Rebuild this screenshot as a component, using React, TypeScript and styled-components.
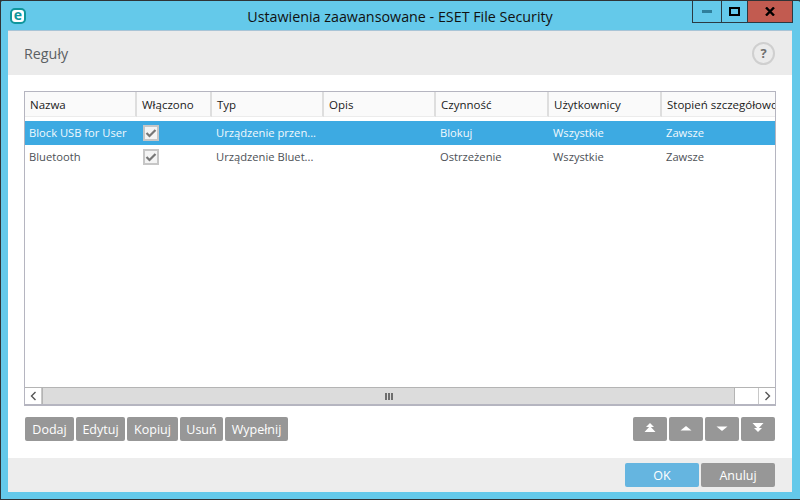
import React from 'react'
import styled, { createGlobalStyle } from 'styled-components'

const GRID_COLUMNS = '112px 75px 112px 112px 113px 113px 140px'

const GlobalStyle = createGlobalStyle`
  html, body {
    margin: 0;
    padding: 0;
    background: #2f3336;
  }
  * {
    box-sizing: border-box;
  }
`

const Window = styled.div`
  width: 800px;
  height: 500px;
  display: flex;
  flex-direction: column;
  overflow: hidden;
  padding: 0 7px 7px 7px;
  background: #64c9ea;
  border: 1px solid #2f3336;
  border-right-width: 0;
  border-radius: 2px 2px 0 0;
  font-family: 'Open Sans', 'Liberation Sans', sans-serif;
`

const TitleBar = styled.div`
  height: 29px;
  flex: none;
  margin-right: 1px;
  display: grid;
  grid-template-columns: 1fr auto 1fr;
  align-items: start;
`

const Logo = styled.div`
  width: 16px;
  height: 16px;
  margin: 7px 0 0 2px;
  display: flex;
  align-items: center;
  justify-content: center;
  background: #fff;
  border: 2px solid #0f969c;
  border-radius: 5px;
  color: #0f969c;
  font: 700 14px/1 'Open Sans', sans-serif;
  padding-bottom: 2px;
`

const Title = styled.div`
  margin-top: 6px;
  font-size: 14.3px;
  line-height: 20px;
  color: #111;
  white-space: nowrap;
`

const Controls = styled.div`
  justify-self: end;
  margin-right: -1px;
  display: flex;
  height: 22px;
  border: 1px solid #2b3a42;
  border-top: 0;
`

const ControlButton = styled.div<{ $width: number; $close?: boolean }>`
  width: ${({ $width }) => $width}px;
  display: flex;
  align-items: center;
  justify-content: center;
  background: ${({ $close }) => ($close ? '#c25b50' : 'transparent')};
  & + & {
    border-left: 1px solid #2b3a42;
  }
`

const Panel = styled.div`
  flex: 1;
  display: flex;
  flex-direction: column;
  min-height: 0;
  margin-right: 1px;
  background: #fff;
  border-top: 1px solid #a9c4d6;
`

const Header = styled.div`
  height: 44px;
  flex: none;
  display: flex;
  align-items: center;
  justify-content: space-between;
  padding: 0 17px 0 16px;
  background: #ebebeb;
`

const HeaderTitle = styled.div`
  font-size: 14.3px;
  color: #5b5f63;
`

const HelpButton = styled.div`
  width: 23px;
  height: 23px;
  display: flex;
  align-items: center;
  justify-content: center;
  border: 2px solid #cfcfcf;
  border-radius: 50%;
  color: #6f6f6f;
  font-size: 13px;
  font-weight: 700;
`

const Content = styled.div`
  flex: 1;
  display: flex;
  flex-direction: column;
  min-height: 0;
  padding: 16px 16px 17px 16px;
`

const Table = styled.div`
  height: 315px;
  flex: none;
  display: flex;
  flex-direction: column;
  overflow: hidden;
  border: 1px solid #b5b5c0;
  border-bottom-width: 2px;
  color: #4d5156;
`

const HeaderRow = styled.div`
  height: 29px;
  flex: none;
  display: grid;
  grid-template-columns: ${GRID_COLUMNS};
  padding-bottom: 4px;
`

const HeaderCell = styled.div`
  display: flex;
  align-items: center;
  padding-left: 5px;
  background: #fafafa;
  border-right: 2px solid #dedede;
  border-bottom: 1px solid #ececec;
  font-size: 11.5px;
  color: #1b1b1b;
  white-space: nowrap;
  overflow: hidden;

  &:last-child {
    border-right: 0;
  }
`

const Rows = styled.div`
  flex: 1;
  min-height: 0;
`

const Row = styled.div<{ $selected?: boolean }>`
  height: 24px;
  display: grid;
  grid-template-columns: ${GRID_COLUMNS};
  align-items: center;
  background: ${({ $selected }) => ($selected ? '#3daae2' : 'transparent')};
  color: ${({ $selected }) => ($selected ? '#f2f9fd' : '#4d5156')};
`

const Cell = styled.div`
  padding-left: 4px;
  padding-bottom: 2px;
  font-size: 11.2px;
  white-space: nowrap;
  overflow: hidden;
`

const CheckCell = styled.div`
  padding-left: 6px;
  display: flex;
`

const Checkbox = styled.div`
  width: 16px;
  height: 16px;
  display: flex;
  align-items: center;
  justify-content: center;
  background: #f4f4f4;
  border: 2px solid #c6c6c6;
`

const ScrollBar = styled.div`
  height: 17px;
  flex: none;
  display: flex;
  background: #fff;
  border-top: 1px solid #b4b4b4;
`

const ScrollArrow = styled.div`
  width: 17px;
  display: flex;
  align-items: center;
  justify-content: center;
  &:first-child {
    border-right: 1px solid #c8c8c8;
  }
  &:last-child {
    border-left: 1px solid #c8c8c8;
  }
`

const ScrollTrack = styled.div`
  flex: 1;
  padding-right: 23px;
  display: flex;
`

const ScrollThumb = styled.div`
  flex: 1;
  display: flex;
  align-items: center;
  justify-content: center;
  gap: 1px;
  background: #dcdcdc;
  border-left: 1px solid #b4b4b4;
  border-right: 1px solid #b4b4b4;
`

const Grip = styled.span`
  width: 2px;
  height: 7px;
  background: #6e6e6e;
`

const Toolbar = styled.div`
  margin-top: 11px;
  padding: 0 1px 0 1px;
  display: flex;
  justify-content: space-between;
`

const ButtonGroup = styled.div`
  display: flex;
  gap: 2px;
`

const Button = styled.div<{ $width: number; $primary?: boolean }>`
  width: ${({ $width }) => $width}px;
  height: 24px;
  display: flex;
  align-items: center;
  justify-content: center;
  background: ${({ $primary }) => ($primary ? '#65b5e0' : '#979797')};
  border-radius: 2px;
  color: #fff;
  font-size: 12.5px;
`

const Footer = styled.div`
  height: 34px;
  flex: none;
  display: flex;
  justify-content: flex-end;
  padding: 5px 17px 0 0;
  background: #ededed;
`

const columns = ['Nazwa', 'Włączono', 'Typ', 'Opis', 'Czynność', 'Użytkownicy', 'Stopień szczegółowości']

const rules = [
  { name: 'Block USB for User', type: 'Urządzenie przen...', action: 'Blokuj', selected: true },
  { name: 'Bluetooth', type: 'Urządzenie Bluet...', action: 'Ostrzeżenie', selected: false },
]

const leftButtons = [
  { label: 'Dodaj', width: 49 },
  { label: 'Edytuj', width: 49 },
  { label: 'Kopiuj', width: 51 },
  { label: 'Usuń', width: 43 },
  { label: 'Wypełnij', width: 63 },
]

const moves = [
  'M7 0 L11 4 H3 Z M7 3 L12.5 9 H1.5 Z',
  'M7 3 L12.5 7.5 H1.5 Z',
  'M1.5 3.5 H12.5 L7 8 Z',
  'M1.5 0 H12.5 L7 6 Z M3 5 H11 L7 9 Z',
]

const CheckMark = () => (
  <svg width="12" height="10" viewBox="0 0 12 10">
    <path d="M1.5 5 L4.5 8 L10.5 2" fill="none" stroke="#777" strokeWidth="2.2" />
  </svg>
)

const Chevron = ({ d }: { d: string }) => (
  <svg width="7" height="10" viewBox="0 0 7 10">
    <path d={d} fill="none" stroke="#555" strokeWidth="1.4" />
  </svg>
)

export default function App() {
  return (
    <>
      <GlobalStyle />
      <Window>
        <TitleBar>
          <Logo>e</Logo>
          <Title>Ustawienia zaawansowane - ESET File Security</Title>
          <Controls>
            <ControlButton $width={28}>
              <svg width="10" height="3" viewBox="0 0 10 3">
                <rect width="10" height="3" fill="#2f7f9c" />
              </svg>
            </ControlButton>
            <ControlButton $width={26}>
              <svg width="11" height="9" viewBox="0 0 11 9">
                <rect x="1" y="1" width="9" height="7" fill="none" stroke="#000" strokeWidth="2" />
              </svg>
            </ControlButton>
            <ControlButton $width={45} $close>
              <svg width="10" height="9" viewBox="0 0 10 9">
                <path d="M1 0.5 L9 8.5 M9 0.5 L1 8.5" stroke="#000" strokeWidth="2.4" />
              </svg>
            </ControlButton>
          </Controls>
        </TitleBar>
        <Panel>
          <Header>
            <HeaderTitle>Reguły</HeaderTitle>
            <HelpButton>?</HelpButton>
          </Header>
          <Content>
            <Table>
              <HeaderRow>
                {columns.map((column) => (
                  <HeaderCell key={column}>{column}</HeaderCell>
                ))}
              </HeaderRow>
              <Rows>
                {rules.map((rule) => (
                  <Row key={rule.name} $selected={rule.selected}>
                    <Cell>{rule.name}</Cell>
                    <CheckCell>
                      <Checkbox>
                        <CheckMark />
                      </Checkbox>
                    </CheckCell>
                    <Cell>{rule.type}</Cell>
                    <Cell />
                    <Cell>{rule.action}</Cell>
                    <Cell>Wszystkie</Cell>
                    <Cell>Zawsze</Cell>
                  </Row>
                ))}
              </Rows>
              <ScrollBar>
                <ScrollArrow>
                  <Chevron d="M5.5 1 L1.5 5 L5.5 9" />
                </ScrollArrow>
                <ScrollTrack>
                  <ScrollThumb>
                    <Grip />
                    <Grip />
                    <Grip />
                  </ScrollThumb>
                </ScrollTrack>
                <ScrollArrow>
                  <Chevron d="M1.5 1 L5.5 5 L1.5 9" />
                </ScrollArrow>
              </ScrollBar>
            </Table>
            <Toolbar>
              <ButtonGroup>
                {leftButtons.map((button) => (
                  <Button key={button.label} $width={button.width}>
                    {button.label}
                  </Button>
                ))}
              </ButtonGroup>
              <ButtonGroup>
                {moves.map((d) => (
                  <Button key={d} $width={34}>
                    <svg width="14" height="12" viewBox="0 0 14 12">
                      <path d={d} fill="#fff" />
                    </svg>
                  </Button>
                ))}
              </ButtonGroup>
            </Toolbar>
          </Content>
          <Footer>
            <ButtonGroup>
              <Button $width={74} $primary>
                OK
              </Button>
              <Button $width={74}>Anuluj</Button>
            </ButtonGroup>
          </Footer>
        </Panel>
      </Window>
    </>
  )
}
